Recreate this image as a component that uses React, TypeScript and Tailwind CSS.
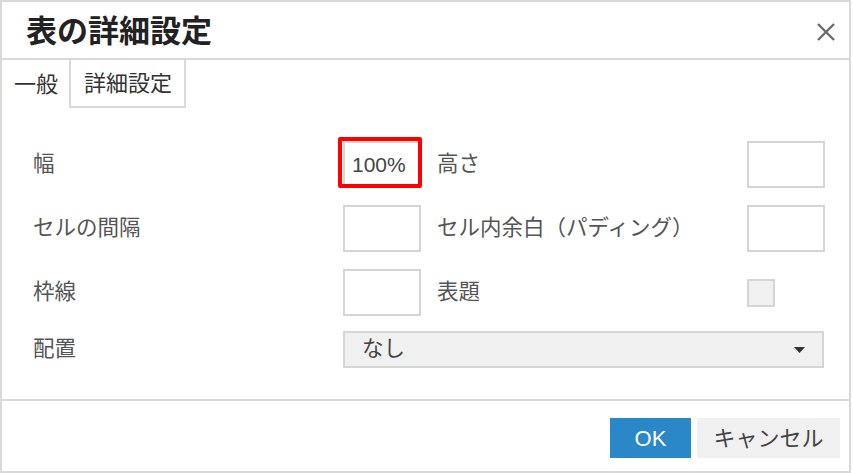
import React from "react";

const font = "font-['Liberation_Sans','Noto_Sans_CJK_JP','Noto_Sans',sans-serif]";

function TextBox({ value }: { value?: string }) {
  return (
    <div className="flex h-[47px] w-[78px] items-center border-2 border-[#d5d5d5] bg-white pl-[7px] text-[21px] text-[#444]">
      {value}
    </div>
  );
}

export default function App() {
  return (
    <div className={`${font} flex h-[473px] w-[851px] flex-col border-2 border-[#d9d9d9] bg-white`}>
      {/* header */}
      <div className="flex h-[58px] shrink-0 items-center justify-between border-b-2 border-[#d9d9d9] pl-[24px] pr-[14px] pt-[3px]">
        <h1 className="text-[31px] font-bold leading-none text-[#222]">表の詳細設定</h1>
        <svg width="18" height="18" viewBox="0 0 18 18">
          <path d="M1 1 L17 17 M17 1 L1 17" stroke="#6b6b6b" strokeWidth="2.4" />
        </svg>
      </div>

      {/* tabs */}
      <div className="flex h-[48px] shrink-0 text-[22px] text-[#333]">
        <div className="flex w-[69px] items-center border-r-2 border-[#d9d9d9] pl-[12px]">一般</div>
        <div className="flex w-[115px] items-center border-b-2 border-r-2 border-[#d9d9d9] pl-[13px]">
          詳細設定
        </div>
      </div>

      {/* body */}
      <div className="flex flex-1 flex-col gap-[17px] border-b-2 border-[#d9d9d9] pl-[31px] pt-[33px] text-[21.5px] text-[#555]">
        <div className="flex items-center">
          <span className="w-[310px]">幅</span>
          <div className="relative">
            <TextBox value="100%" />
            <div className="absolute left-[-5px] top-[-4px] h-[51px] w-[84px] rounded-[2px] border-4 border-[#ff0000]" />
          </div>
          <span className="ml-[16px] w-[310px]">高さ</span>
          <TextBox />
        </div>
        <div className="flex items-center">
          <span className="w-[310px]">セルの間隔</span>
          <TextBox />
          <span className="ml-[16px] w-[310px] whitespace-nowrap">セル内余白（パディング）</span>
          <TextBox />
        </div>
        <div className="flex items-center">
          <span className="w-[310px]">枠線</span>
          <TextBox />
          <span className="ml-[16px] w-[310px]">表題</span>
          <div className="h-[28px] w-[28px] border-2 border-[#d5d5d5] bg-[#f0f0f0]" />
        </div>
        <div className="mt-[-2px] flex items-center">
          <span className="w-[310px]">配置</span>
          <div className="flex h-[37px] w-[481px] items-center justify-between border-2 border-[#d5d5d5] bg-[#f0f0f0] pl-[17px] pr-[17px] text-[#444]">
            <span>なし</span>
            <svg width="11" height="6" viewBox="0 0 11 6">
              <path d="M0 0 L11 0 L5.5 6 Z" fill="#333" />
            </svg>
          </div>
        </div>
      </div>

      {/* footer */}
      <div className="flex h-[70px] shrink-0 items-center justify-end gap-[6px] pr-[9px] pt-[4px] text-[22px]">
        <button className="flex h-[40px] w-[81px] items-center justify-center bg-[#2a87c8] text-white">
          OK
        </button>
        <button className="flex h-[40px] w-[143px] items-center justify-center bg-[#f0f0f0] text-[#444]">
          キャンセル
        </button>
      </div>
    </div>
  );
}
